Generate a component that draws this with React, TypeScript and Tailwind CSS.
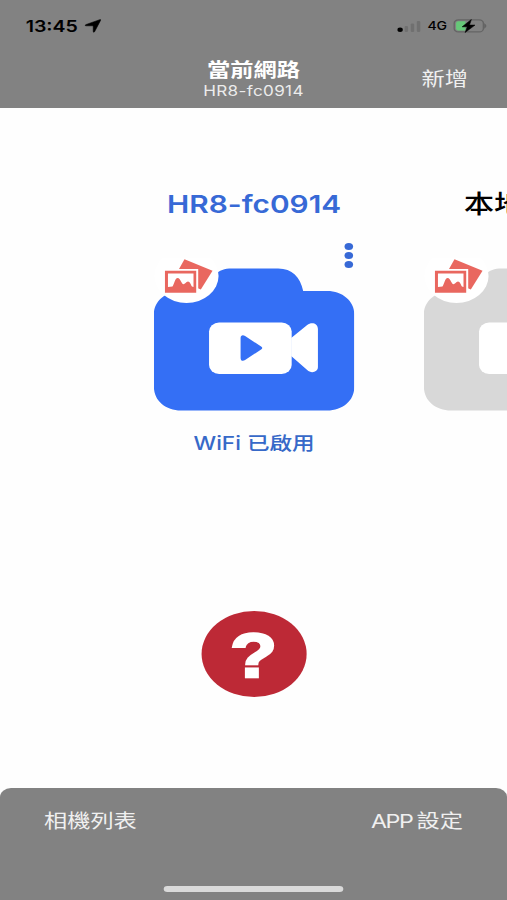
import React from 'react';

interface CameraCardProps {
    title: string;
    status?: string;
    active?: boolean;
}

const PhotoBadge: React.FC = () => (
    <g>
        <ellipse cx="32.500" cy="18" rx="32" ry="27" fill="#fff" />
        <path d="M30.5 1.3 58.5 12.7 46.8 31.5 20 20Z" fill="#e9675f" />
        <path d="M9.5 11H44.200V35.5H9.5Z" fill="#fff" />
        <path d="M11 12.7H42.200V34.7H11Z" fill="#e9675f" />
        <path d="M14 15.4H39.500V29L38 28.6C37 27 36 23.5 34 23.5S31 26.3 29.5 26.3C27.500 26.300 26.500 20 23.700 20S20 27 18.500 28.500L14 29Z" fill="#fff" />
    </g>
);

const CameraGraphic: React.FC<{ color: string }> = ({ color }) => (
    <svg className="block h-[153px] w-[164px]" viewBox="0 0 200 153" preserveAspectRatio="none">
        <path
            d="M27 33C12 33 0 43 0 56V129C0 143 12 152.500 27 152.500H173C188 152.500 200 143 200 129V56C200 43 188 33 173 33H149C146 19 138 10.500 124 10.500H78C70 10.500 66 12 60 17L20 33Z"
            fill={color}
        />
        <rect x="55" y="64.500" width="82.500" height="51.500" rx="10" ry="9" fill="#fff" />
        <path d="M137 80 153 67C157 63.500 163.700 65 163.700 71V109C163.700 114 157 116 153 112L137 98Z" fill="#fff" />
        <path d="M86.500 80C86.500 77 89 76.500 91 78L107 88.500C108.500 89.500 108.500 90.500 107 91.500L91 102C89 103.500 86.500 103 86.500 100Z" fill={color} />
        <PhotoBadge />
    </svg>
);

const CameraCard: React.FC<CameraCardProps> = ({ title, status, active }) => (
    <div className="relative flex w-[164px] shrink-0 flex-col items-center">
        <h2 className={`whitespace-nowrap leading-8 ${active ? 'text-[24.4px] font-semibold text-[#3769d6]' : 'text-[24.6px] font-medium text-black'}`}>
            {title}
        </h2>
        {active && (
            <button className="absolute top-[55px] right-[1px] flex flex-col gap-[2px]" aria-label="menu">
                <span className="size-[7px] rounded-full bg-[#3769d6]" />
                <span className="size-[7px] rounded-full bg-[#3769d6]" />
                <span className="size-[7px] rounded-full bg-[#3769d6]" />
            </button>
        )}
        <div className="mt-[38px]">
            <CameraGraphic color={active ? '#346ff5' : '#d8d8d8'} />
        </div>
        {status && (
            <p className="mt-5 whitespace-nowrap text-[18.5px] leading-6 font-medium text-[#3769c8]">{status}</p>
        )}
    </div>
);

const StatusBar: React.FC = () => (
    <div className="flex h-[52px] items-center pl-[21px] pr-[16px] text-black">
        <span className="text-[16px] font-semibold">13:45</span>
        <svg className="ml-[5px] size-[14px]" viewBox="0 0 14 14">
            <path d="M12.600.700Q13.700.300 13.300 1.400L8.400 12.800Q7.700 13.700 7.300 12.700V7.300Q7.300 6.800 6.800 6.800H1.300Q.100 6.500 1.100 5.700Z" fill="currentColor" stroke="currentColor" strokeWidth=".500" />
        </svg>
        <svg className="ml-auto h-[13px] w-[20px]" viewBox="0 0 20 13">
            <circle cx="2.500" cy="9.700" r="2.200" fill="#000" />
            <rect x="6.200" y="6" width="2.800" height="6" rx="1" fill="#707070" />
            <rect x="11.200" y="3.500" width="2.800" height="8.500" rx="1" fill="#707070" />
            <rect x="16.200" y="1" width="2.800" height="11" rx="1" fill="#707070" />
        </svg>
        <span className="ml-[5px] pt-[2px] text-[11.5px] font-medium">4G</span>
        <svg className="ml-[5px] h-[14px] w-[28px]" viewBox="0 0 28 14">
            <rect x=".700" y=".900" width="24" height="12" rx="3.500" fill="none" stroke="#646464" strokeWidth="1.200" />
            <path d="M25.300 4.300Q29 7 25.300 9.700Z" fill="#646464" />
            <path d="M4 2.300H10V11.500H4Q2.300 11.500 2.300 9.500V4.400Q2.300 2.300 4 2.300Z" fill="#66c878" />
            <path d="M14.800.500 7.300 7.800H11.500L9.700 13.500 17.800 6.100H13.300Z" fill="#000" stroke="#000" strokeWidth=".500" strokeLinejoin="round" />
        </svg>
    </div>
);

export default function App() {
    return (
        <div className="h-[900px] w-[507px] overflow-hidden bg-white">
            {/* The 415pt wide screen is stretched horizontally to fill the window */}
            <div className="flex h-[900px] w-[415px] origin-top-left scale-x-[1.2217] flex-col overflow-hidden bg-[#fefefe] font-['Inter','Noto_Sans_CJK_TC',sans-serif]">
                <header className="h-[108px] bg-[#828282]">
                    <StatusBar />
                    <div className="grid grid-cols-[1fr_auto_1fr] items-center pt-[7px] text-white">
                        <div />
                        <div className="text-center">
                            <h1 className="text-[19px] leading-6 font-bold">當前網路</h1>
                            <p className="text-[14px] leading-4 tracking-[0.02em] text-[#ececec]">HR8-fc0914</p>
                        </div>
                        <button className="justify-self-end pt-[2px] pr-[32px] text-[19px] text-[#f0f0f0]">新增</button>
                    </div>
                </header>

                <main className="flex flex-1 flex-col">
                    <section className="flex gap-[57px] overflow-hidden pt-[80px] pl-[126px]">
                        <CameraCard title="HR8-fc0914" status="WiFi 已啟用" active />
                        <CameraCard title="本地相簿" />
                    </section>
                    <button className="mt-[156px] flex h-[86px] w-[86px] items-center justify-center self-center rounded-full bg-[#bd2936] pt-[2px] font-['Liberation_Sans',sans-serif] text-[63px] leading-none font-bold text-white [-webkit-text-stroke:2.5px_white]">
                        ?
                    </button>
                </main>

                <footer className="flex h-[112px] flex-col rounded-t-[9px] bg-[#828282] text-[19px] text-[#f0f0f0]">
                    <div className="flex justify-between px-[36px] pt-[20px] leading-7">
                        <button>相機列表</button>
                        <button className="[word-spacing:-2px]">
                            <span className="tracking-[-0.06em]">APP</span> 設定
                        </button>
                    </div>
                    <div className="mt-auto mb-[8px] h-[6px] w-[147px] self-center rounded-full bg-[#dadada]" />
                </footer>
            </div>
        </div>
    );
}
